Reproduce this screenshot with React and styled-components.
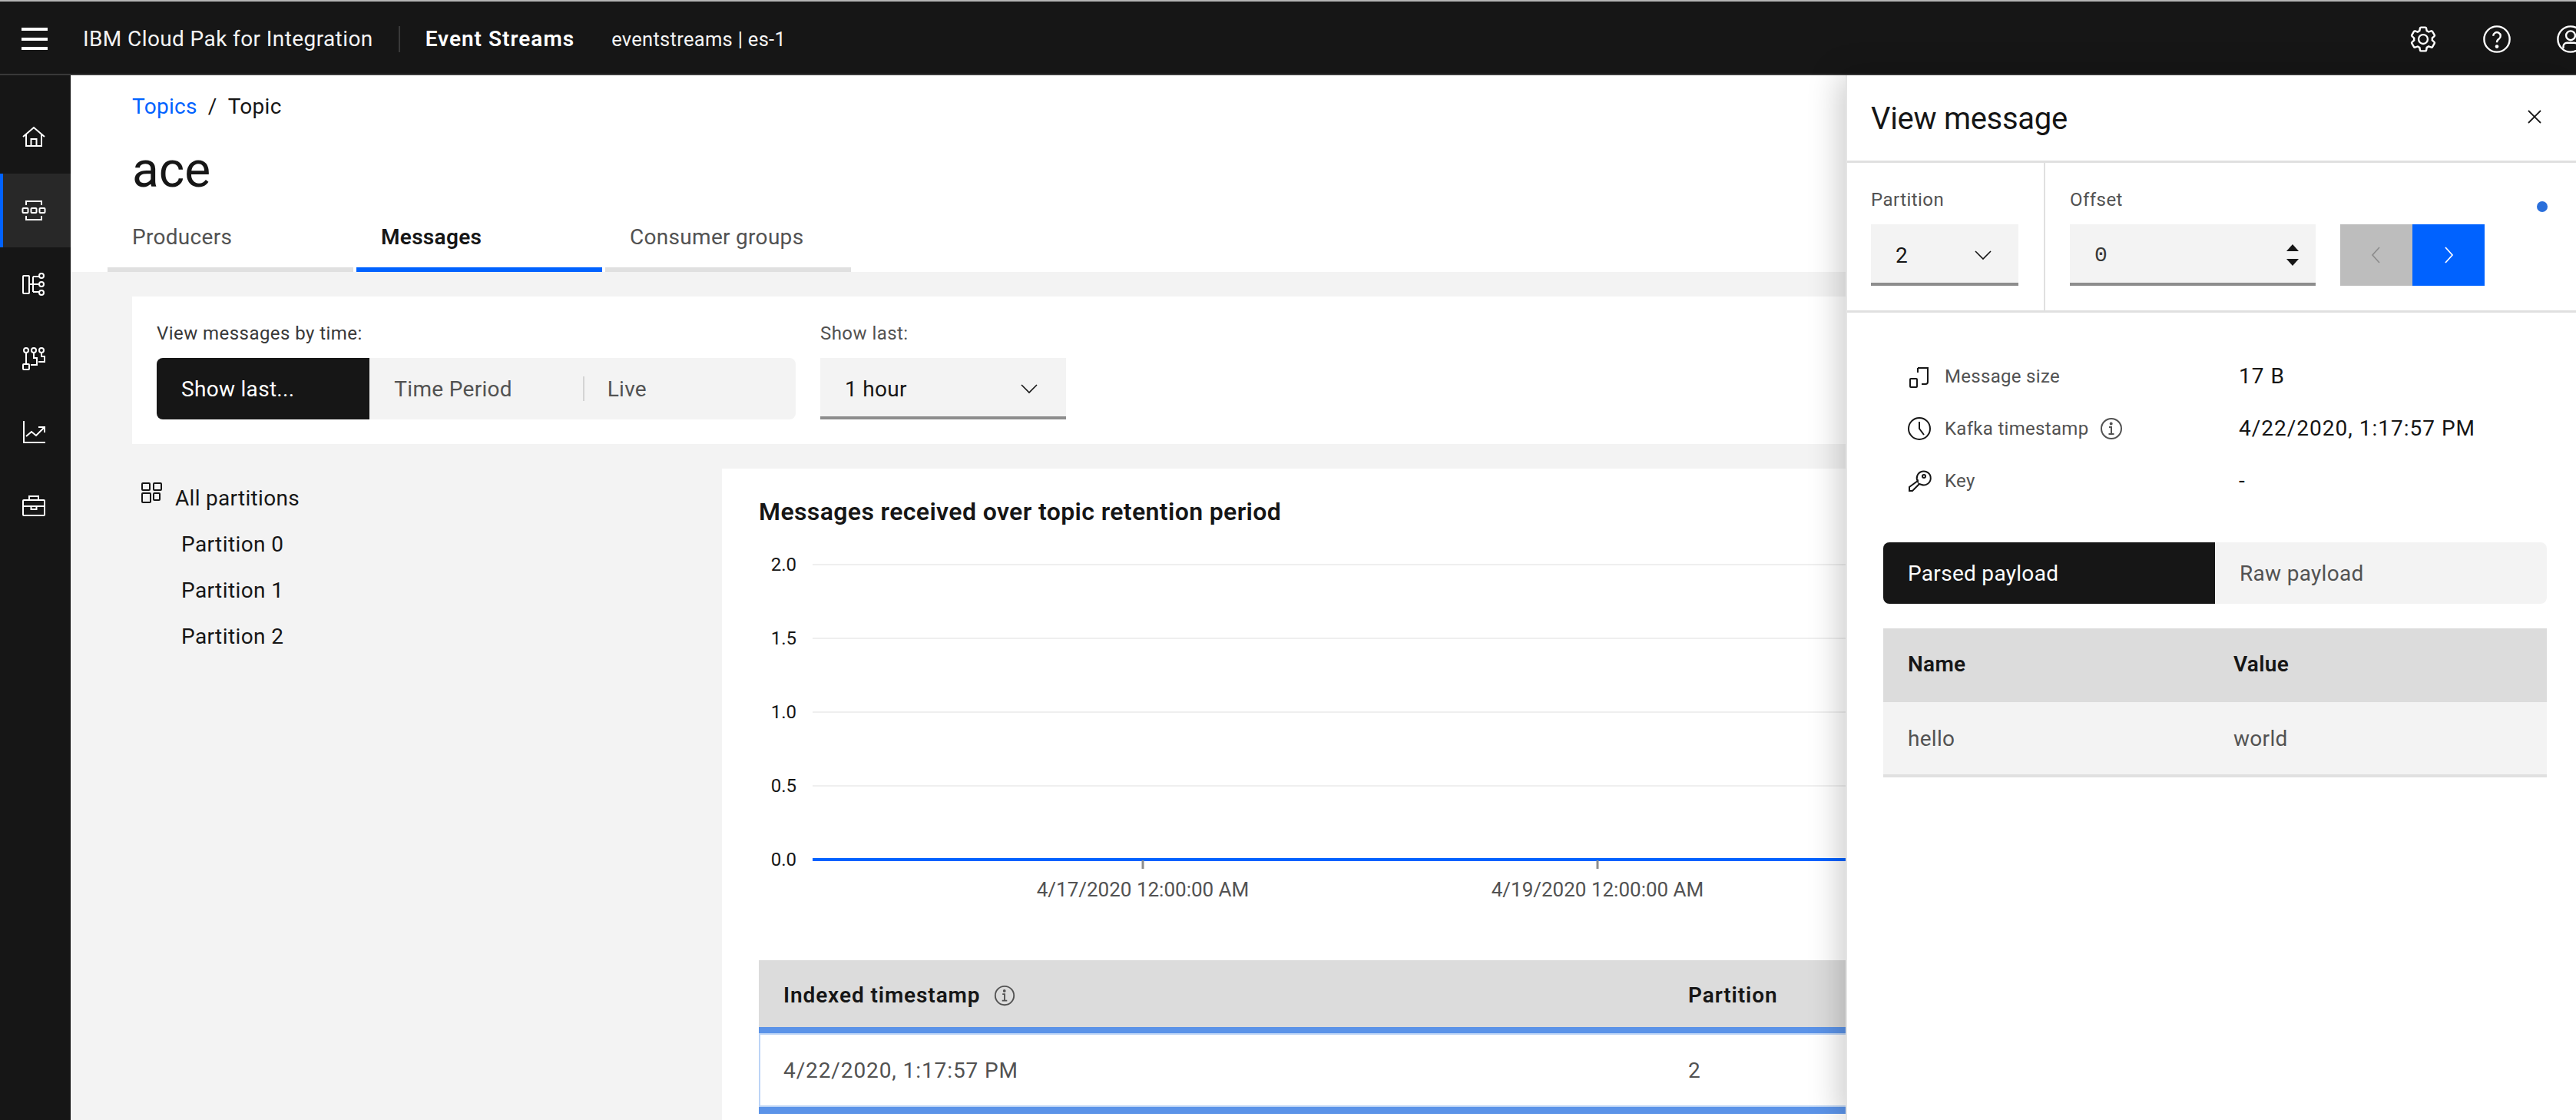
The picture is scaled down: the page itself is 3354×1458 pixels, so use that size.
import styled, { createGlobalStyle } from "styled-components";

const GlobalStyle = createGlobalStyle`
  html, body {
    margin: 0;
    padding: 0;
    background: #fff;
  }
  * {
    box-sizing: border-box;
  }
  body {
    font-family: "Roboto", "Liberation Sans", sans-serif;
    font-size: 28px;
    color: #161616;
  }
`;

const Page = styled.div`
  height: 1458px;
  display: flex;
  flex-direction: column;
  position: relative;
  overflow: hidden;
`;

const Header = styled.header`
  height: 98px;
  flex: none;
  display: flex;
  align-items: center;
  padding-top: 3px;
  background: #161616;
  border-top: 2px solid #b5b5b5;
  border-bottom: 2px solid #393939;
  color: #fff;
  position: relative;
`;

const MenuButton = styled.div`
  width: 34px;
  height: 29px;
  margin-left: 28px;
  margin-right: 46px;
  display: flex;
  flex-direction: column;
  justify-content: space-between;
  span {
    height: 4px;
    background: #fff;
  }
`;

const Brand = styled.span`
  font-size: 28px;
  letter-spacing: 0.4px;
  color: #f4f4f4;
  padding-right: 33px;
  height: 34px;
  line-height: 34px;
  border-right: 2px solid #393939;
`;

const Product = styled.span`
  font-weight: 600;
  font-size: 28px;
  letter-spacing: 1px;
  margin-left: 33px;
  margin-right: 48px;
`;

const Instance = styled.span`
  font-size: 25.5px;
  letter-spacing: 0.3px;
  color: #f4f4f4;
`;

const HeaderIcons = styled.div`
  margin-left: auto;
  display: flex;
  align-items: center;
  gap: 58px;
  margin-right: -12px;
  svg {
    display: block;
    width: 38px;
    height: 38px;
  }
`;

const Body = styled.div`
  flex: 1;
  display: flex;
  min-height: 0;
`;

const SideNav = styled.nav`
  width: 92px;
  flex: none;
  background: #161616;
  padding-top: 32px;
`;

const NavItem = styled.div`
  height: 96px;
  display: flex;
  align-items: center;
  justify-content: center;
  background: ${(p) => (p.$active ? "#282828" : "transparent")};
  border-left: 4px solid ${(p) => (p.$active ? "#0062ff" : "transparent")};
  padding-right: 8px;
  svg {
    width: 32px;
    height: 32px;
    fill: none;
    stroke: #fff;
    stroke-width: 2;
  }
`;

const Main = styled.main`
  flex: 1;
  min-width: 0;
  background: #f3f3f3;
`;

const TitleBar = styled.div`
  height: 256px;
  background: #fff;
  padding-left: 48px;
  display: flex;
  flex-direction: column;
`;

const Breadcrumb = styled.div`
  margin-left: 32px;
  height: 36px;
  line-height: 36px;
  margin-top: 23px;
  display: flex;
  gap: 14px;
  letter-spacing: 0.3px;
`;

const Crumb = styled.span`
  color: ${(p) => (p.$link ? "#0062ff" : "#161616")};
`;

const Title = styled.h1`
  margin: 27px 0 0 32px;
  font-size: 64px;
  line-height: 76px;
  font-weight: 400;
`;

const Tabs = styled.div`
  margin-top: auto;
  display: flex;
  gap: 4px;
`;

const Tab = styled.div`
  width: 320px;
  height: 76px;
  padding-left: 32px;
  padding-top: 13px;
  line-height: 36px;
  letter-spacing: 0.3px;
  font-weight: ${(p) => (p.$active ? 600 : 400)};
  color: ${(p) => (p.$active ? "#161616" : "#525252")};
  border-bottom: 6px solid ${(p) => (p.$active ? "#0062ff" : "#e0e0e0")};
`;

const Content = styled.div`
  padding: 32px 32px 0 80px;
`;

const FilterCard = styled.section`
  height: 192px;
  background: #fff;
  padding: 32px;
  display: flex;
  gap: 32px;
`;

const Field = styled.div`
  display: flex;
  flex-direction: column;
`;

const FieldLabel = styled.label`
  display: block;
  height: 48px;
  line-height: 32px;
  font-size: 24px;
  letter-spacing: 0.45px;
  color: ${(p) => p.$color || "#393939"};
`;

const Switcher = styled.div`
  width: ${(p) => p.$width}px;
  height: 80px;
  display: flex;
  border-radius: 8px;
  background: #f3f3f3;
  overflow: hidden;
`;

const SwitchItem = styled.div`
  flex: 1;
  display: flex;
  align-items: center;
  padding-left: 32px;
  letter-spacing: 0.3px;
  position: relative;
  background: ${(p) => (p.$active ? "#161616" : "transparent")};
  color: ${(p) => (p.$active ? "#fff" : "#525252")};
  &::before {
    content: "";
    display: ${(p) => (p.$divider ? "block" : "none")};
    position: absolute;
    left: 0;
    top: 24px;
    bottom: 24px;
    width: 2px;
    background: #d4d4d4;
  }
`;

const SelectBox = styled.div`
  width: ${(p) => p.$width}px;
  height: 80px;
  background: #f3f3f3;
  border-bottom: 4px solid #8d8d8d;
  display: flex;
  align-items: center;
  justify-content: space-between;
  padding: 4px ${(p) => p.$right}px 0 ${(p) => p.$left}px;
  letter-spacing: 0.3px;
  svg {
    width: 32px;
    height: 32px;
    fill: none;
    stroke: #161616;
    stroke-width: 1.6;
  }
`;

const Split = styled.div`
  margin-top: 32px;
  display: flex;
`;

const PartitionList = styled.aside`
  width: 768px;
  flex: none;
`;

const PartitionAll = styled.div`
  height: 60px;
  margin-top: 8px;
  padding-left: 12px;
  display: flex;
  align-items: center;
  gap: 16px;
  letter-spacing: 0.3px;
  svg {
    width: 28px;
    height: 28px;
    margin-top: -14px;
    fill: none;
    stroke: #161616;
    stroke-width: 2;
  }
`;

const PartitionItem = styled.div`
  height: 60px;
  line-height: 62px;
  padding-left: 64px;
  letter-spacing: 0.4px;
`;

const ChartCard = styled.section`
  flex: 1;
  min-width: 0;
  height: 848px;
  background: #fff;
  padding: 0 48px;
`;

const ChartTitle = styled.h2`
  margin: 0;
  height: 90px;
  padding-top: 34px;
  line-height: 44px;
  font-size: 32px;
  font-weight: 600;
  letter-spacing: 0.38px;
`;

const Chart = styled.svg`
  display: block;
  width: 100%;
  height: 550px;
  text {
    font-family: "Roboto", "Liberation Sans", sans-serif;
  }
`;

const TableRow = styled.div`
  display: grid;
  grid-template-columns: 1178px 1fr;
  align-items: center;
  letter-spacing: 0.3px;
`;

const MessagesHead = styled(TableRow)`
  height: 87px;
  padding-top: 4px;
  background: #dcdcdc;
  font-weight: 600;
  color: #161616;
  letter-spacing: 0.9px;
`;

const MessagesRow = styled(TableRow)`
  height: 113px;
  background: #fff;
  color: #525252;
  letter-spacing: 0.9px;
  border: solid #5b93e8;
  border-width: 8px 0 9px;
  box-shadow: inset 2px 0 0 #bcd4f6, inset 0 2px 0 #bcd4f6, inset 0 -2px 0 #bcd4f6;
`;

const Cell = styled.div`
  padding-left: 32px;
  display: flex;
  align-items: center;
  gap: 16px;
  svg {
    width: 30px;
    height: 30px;
    fill: none;
    stroke: #525252;
    stroke-width: 2;
  }
`;

const Panel = styled.aside`
  position: absolute;
  top: 98px;
  right: 0;
  bottom: 0;
  width: 951px;
  background: #fff;
  border-left: 2px solid #e4e4e4;
  box-shadow: -6px 0 40px rgba(0, 0, 0, 0.22);
`;

const PanelHead = styled.div`
  height: 114px;
  display: flex;
  align-items: center;
  justify-content: space-between;
  padding: 0 38px 0 31px;
  border-bottom: 3px solid #e0e0e0;
  svg {
    width: 32px;
    height: 32px;
    margin-top: -4px;
    fill: none;
    stroke: #161616;
    stroke-width: 1.8;
  }
`;

const PanelTitle = styled.h2`
  margin: 2px 0 0;
  font-size: 40px;
  font-weight: 400;
  letter-spacing: -0.3px;
`;

const PanelControls = styled.div`
  height: 195px;
  display: flex;
  border-bottom: 3px solid #e0e0e0;
  position: relative;
`;

const PartitionControl = styled.div`
  width: 258px;
  padding: 32px 0 0 31px;
  border-right: 2px solid #e0e0e0;
`;

const OffsetControl = styled.div`
  padding: 32px 0 0 32px;
`;

const OffsetRow = styled.div`
  display: flex;
  gap: 32px;
`;

const OffsetInput = styled.div`
  width: 320px;
  height: 80px;
  background: #f3f3f3;
  border-bottom: 4px solid #8d8d8d;
  display: flex;
  align-items: center;
  justify-content: space-between;
  padding: 4px 22px 0 32px;
  font-family: "Liberation Mono", monospace;
  color: #393939;
`;

const Stepper = styled.div`
  display: flex;
  flex-direction: column;
  gap: 10px;
  i {
    display: block;
    width: 0;
    height: 0;
    border-left: 8px solid transparent;
    border-right: 8px solid transparent;
  }
  i:first-child {
    border-bottom: 9px solid #161616;
  }
  i:last-child {
    border-top: 9px solid #161616;
  }
`;

const PagerButton = styled.div`
  width: 94px;
  height: 80px;
  display: flex;
  align-items: center;
  justify-content: center;
  background: ${(p) => (p.$primary ? "#0062ff" : "#bdbdbd")};
  svg {
    width: 32px;
    height: 32px;
    fill: none;
    stroke: ${(p) => (p.$primary ? "#fff" : "#8d8d8d")};
    stroke-width: 1.7;
  }
`;

const Pager = styled.div`
  display: flex;
`;

const StatusDot = styled.span`
  position: absolute;
  top: 50px;
  left: 898px;
  width: 14px;
  height: 14px;
  border-radius: 50%;
  background: #2a6fdb;
`;

const PanelBody = styled.div`
  padding: 0 38px 0 47px;
`;

const MetaList = styled.div`
  padding-top: 49px;
  margin-bottom: 46px;
`;

const MetaRow = styled.div`
  height: 68px;
  display: grid;
  grid-template-columns: 432px 1fr;
  align-items: center;
  padding-left: 31px;
`;

const MetaLabel = styled.div`
  display: flex;
  align-items: center;
  font-size: 24px;
  letter-spacing: 0.3px;
  color: #525252;
  svg {
    width: 32px;
    height: 32px;
    margin-right: 17px;
    flex: none;
    fill: none;
    stroke: #161616;
    stroke-width: 2;
  }
`;

const MetaInfo = styled.span`
  margin-left: 14px;
  display: flex;
  svg {
    width: 32px;
    height: 32px;
    margin: 0;
    stroke: #525252;
  }
`;

const MetaValue = styled.div`
  letter-spacing: 1px;
  margin-top: -2px;
`;

const PayloadTable = styled.div`
  margin-top: 32px;
`;

const PayloadRow = styled.div`
  display: grid;
  grid-template-columns: 424px 1fr;
  align-items: center;
  height: ${(p) => (p.$head ? 96 : 98)}px;
  padding-bottom: ${(p) => (p.$head ? 3 : 0)}px;
  background: ${(p) => (p.$head ? "#dcdcdc" : "#f3f3f3")};
  color: ${(p) => (p.$head ? "#161616" : "#525252")};
  font-weight: ${(p) => (p.$head ? 600 : 400)};
  border-bottom: ${(p) => (p.$head ? "none" : "4px solid #e0e0e0")};
  letter-spacing: 0.3px;
  span {
    padding-left: 32px;
  }
`;

const Info = () => (
  <svg viewBox="0 0 32 32">
    <circle cx="16" cy="16" r="13" />
    <path d="M12.5 23h7M16 23v-9h-3" />
    <circle cx="15.7" cy="9.5" r="1" />
  </svg>
);

const Chevron = () => (
  <svg viewBox="0 0 32 32">
    <path d="M6 11l10 10 10-10" />
  </svg>
);

const gridLines = [
  { y: 35, label: "2.0" },
  { y: 131, label: "1.5" },
  { y: 227, label: "1.0" },
  { y: 323, label: "0.5" },
];

const xTicks = [
  { x: 500, label: "4/17/2020 12:00:00 AM" },
  { x: 1092, label: "4/19/2020 12:00:00 AM" },
];

const menuRows = ["Partition 0", "Partition 1", "Partition 2"];

export default function App() {
  return (
    <Page>
      <GlobalStyle />
      <Header>
        <MenuButton>
          <span />
          <span />
          <span />
        </MenuButton>
        <Brand>IBM Cloud Pak for Integration</Brand>
        <Product>Event Streams</Product>
        <Instance>eventstreams | es-1</Instance>
        <HeaderIcons>
          <svg viewBox="0 0 32 32" fill="#fff">
            <path d="M27,16.76c0-.25,0-.5,0-.76s0-.51,0-.77l1.92-1.68A2,2,0,0,0,29.3,11L26.94,7a2,2,0,0,0-1.73-1,2,2,0,0,0-.64.1l-2.43.82a11.35,11.35,0,0,0-1.31-.75l-.51-2.52a2,2,0,0,0-2-1.61H13.64a2,2,0,0,0-2,1.61l-.51,2.52a11.48,11.48,0,0,0-1.32.75L7.43,6.06A2,2,0,0,0,6.79,6,2,2,0,0,0,5.06,7L2.7,11a2,2,0,0,0,.41,2.51L5,15.24c0,.25,0,.5,0,.76s0,.51,0,.77L3.11,18.45A2,2,0,0,0,2.7,21L5.06,25a2,2,0,0,0,1.73,1,2,2,0,0,0,.64-.1l2.43-.82a11.35,11.35,0,0,0,1.31.75l.51,2.52a2,2,0,0,0,2,1.61h4.72a2,2,0,0,0,2-1.61l.51-2.52a11.48,11.48,0,0,0,1.32-.75l2.42.82a2,2,0,0,0,.64.1,2,2,0,0,0,1.73-1L29.3,21a2,2,0,0,0-.41-2.51ZM25.21,24l-3.43-1.16a8.86,8.86,0,0,1-2.71,1.57L18.36,28H13.64l-.71-3.55a9.36,9.36,0,0,1-2.7-1.57L6.79,24,4.43,20l2.72-2.4a8.9,8.9,0,0,1,0-3.13L4.43,12,6.79,8l3.43,1.16a8.86,8.86,0,0,1,2.71-1.57L13.64,4h4.72l.71,3.55a9.36,9.36,0,0,1,2.7,1.57L25.21,8,27.57,12l-2.72,2.4a8.9,8.9,0,0,1,0,3.13L27.57,20Z" />
            <path d="M16,22a6,6,0,1,1,6-6A5.94,5.94,0,0,1,16,22Zm0-10a3.91,3.91,0,0,0-4,4,3.91,3.91,0,0,0,4,4,3.91,3.91,0,0,0,4-4A3.91,3.91,0,0,0,16,12Z" />
          </svg>
          <svg viewBox="0 0 32 32" fill="none" stroke="#fff" strokeWidth="2">
            <circle cx="16" cy="16" r="14" />
            <path d="M12 12.5a4 4 0 1 1 6.2 3.3c-1.4.9-2.2 1.6-2.2 3.7" />
            <circle cx="16" cy="24" r="1" fill="#fff" />
          </svg>
          <svg viewBox="0 0 32 32" fill="none" stroke="#fff" strokeWidth="2">
            <circle cx="16" cy="16" r="14" />
            <circle cx="16" cy="12" r="5" />
            <path d="M8 26v-2a4 4 0 0 1 4-4h8a4 4 0 0 1 4 4v2" />
          </svg>
        </HeaderIcons>
      </Header>
      <Body>
        <SideNav>
          <NavItem>
            <svg viewBox="0 0 32 32">
              <path d="M2 16L16 4l14 12M6 13v15h20V13M12.5 28v-9h7v9" />
            </svg>
          </NavItem>
          <NavItem $active>
            <svg viewBox="0 0 32 32">
              <path d="M6 9V4h20v5M6 23v5h20v-5" />
              <rect x="1.5" y="13" width="7" height="6" rx="1" />
              <rect x="12.5" y="13" width="7" height="6" rx="1" />
              <rect x="23.5" y="13" width="7" height="6" rx="1" />
            </svg>
          </NavItem>
          <NavItem>
            <svg viewBox="0 0 32 32">
              <rect x="2" y="5" width="8" height="23" rx="1" />
              <path d="M10 16h13M15 6h8M15 26h8M15 6v20" />
              <circle cx="26" cy="5" r="3" />
              <circle cx="26" cy="16" r="3" />
              <circle cx="26" cy="27" r="3" />
            </svg>
          </NavItem>
          <NavItem>
            <svg viewBox="0 0 32 32">
              <circle cx="6" cy="6" r="3" />
              <circle cx="16" cy="6" r="3" />
              <circle cx="26" cy="6" r="3" />
              <rect x="2" y="24" width="8" height="7" rx="1" />
              <path d="M6 9v15M16 9v7h4v9h-8M26 9v5h4v7h-8" />
            </svg>
          </NavItem>
          <NavItem>
            <svg viewBox="0 0 32 32">
              <path d="M3 2v28h28M6 22l7-6 6 5 10-10M22 10h8v7" />
            </svg>
          </NavItem>
          <NavItem>
            <svg viewBox="0 0 32 32">
              <rect x="2" y="9" width="28" height="20" rx="1" />
              <path d="M10 9V4h12v5M2 17h28" />
              <rect x="12.5" y="17" width="7" height="4" />
            </svg>
          </NavItem>
        </SideNav>
        <Main>
          <TitleBar>
            <Breadcrumb>
              <Crumb $link>Topics</Crumb>
              <Crumb>/</Crumb>
              <Crumb>Topic</Crumb>
            </Breadcrumb>
            <Title>ace</Title>
            <Tabs>
              <Tab>Producers</Tab>
              <Tab $active>Messages</Tab>
              <Tab>Consumer groups</Tab>
            </Tabs>
          </TitleBar>
          <Content>
            <FilterCard>
              <Field>
                <FieldLabel>View messages by time:</FieldLabel>
                <Switcher $width={832}>
                  <SwitchItem $active>Show last...</SwitchItem>
                  <SwitchItem>Time Period</SwitchItem>
                  <SwitchItem $divider>Live</SwitchItem>
                </Switcher>
              </Field>
              <Field>
                <FieldLabel $color="#525252">Show last:</FieldLabel>
                <SelectBox $width={320} $left={32} $right={32}>
                  1 hour
                  <Chevron />
                </SelectBox>
              </Field>
            </FilterCard>
            <Split>
              <PartitionList>
                <PartitionAll>
                  <svg viewBox="0 0 28 28">
                    <rect x="1" y="2" width="10" height="9" rx="1" />
                    <rect x="16" y="2" width="10" height="9" rx="1" />
                    <rect x="1" y="15" width="11" height="12" rx="1" />
                    <rect x="16" y="15" width="8" height="9" rx="1" />
                  </svg>
                  All partitions
                </PartitionAll>
                {menuRows.map((row) => (
                  <PartitionItem key={row}>{row}</PartitionItem>
                ))}
              </PartitionList>
              <ChartCard>
                <ChartTitle>Messages received over topic retention period</ChartTitle>
                <Chart>
                  {gridLines.map((line) => (
                    <g key={line.label}>
                      <line x1="70" x2="2286" y1={line.y} y2={line.y} stroke="#efefef" strokeWidth="2" />
                      <text x="49" y={line.y + 8} fontSize="24" fill="#161616" textAnchor="end">
                        {line.label}
                      </text>
                    </g>
                  ))}
                  <line x1="70" x2="2286" y1="419" y2="419" stroke="#0062ff" strokeWidth="4" />
                  <text x="49" y="427" fontSize="24" fill="#161616" textAnchor="end">
                    0.0
                  </text>
                  {xTicks.map((tick) => (
                    <g key={tick.label}>
                      <line x1={tick.x} x2={tick.x} y1="420" y2="431" stroke="#8d8d8d" strokeWidth="3" />
                      <text x={tick.x} y="467" fontSize="26" fill="#525252" textAnchor="middle">
                        {tick.label}
                      </text>
                    </g>
                  ))}
                </Chart>
                <MessagesHead>
                  <Cell>
                    Indexed timestamp
                    <Info />
                  </Cell>
                  <Cell>Partition</Cell>
                </MessagesHead>
                <MessagesRow>
                  <Cell>4/22/2020, 1:17:57 PM</Cell>
                  <Cell>2</Cell>
                </MessagesRow>
              </ChartCard>
            </Split>
          </Content>
        </Main>
      </Body>
      <Panel>
        <PanelHead>
          <PanelTitle>View message</PanelTitle>
          <svg viewBox="0 0 32 32">
            <path d="M8 8l16 16M24 8L8 24" />
          </svg>
        </PanelHead>
        <PanelControls>
          <PartitionControl>
            <FieldLabel $color="#525252">Partition</FieldLabel>
            <SelectBox $width={192} $left={32} $right={30}>
              2
              <Chevron />
            </SelectBox>
          </PartitionControl>
          <OffsetControl>
            <FieldLabel $color="#525252">Offset</FieldLabel>
            <OffsetRow>
              <OffsetInput>
                0
                <Stepper>
                  <i />
                  <i />
                </Stepper>
              </OffsetInput>
              <Pager>
                <PagerButton>
                  <svg viewBox="0 0 32 32">
                    <path d="M20 6L11 16l9 10" />
                  </svg>
                </PagerButton>
                <PagerButton $primary>
                  <svg viewBox="0 0 32 32">
                    <path d="M12 6l9 10-9 10" />
                  </svg>
                </PagerButton>
              </Pager>
            </OffsetRow>
          </OffsetControl>
          <StatusDot />
        </PanelControls>
        <PanelBody>
          <MetaList>
            <MetaRow>
              <MetaLabel>
                <svg viewBox="0 0 32 32">
                  <path d="M14 5h13v18a3 3 0 0 1-3 3h-5" />
                  <rect x="4" y="19" width="9" height="11" rx="1" />
                  <path d="M14 5v6" />
                </svg>
                Message size
              </MetaLabel>
              <MetaValue>17 B</MetaValue>
            </MetaRow>
            <MetaRow>
              <MetaLabel>
                <svg viewBox="0 0 32 32">
                  <circle cx="16" cy="16" r="14" />
                  <path d="M16 7v9l6 8" />
                </svg>
                Kafka timestamp
                <MetaInfo>
                  <Info />
                </MetaInfo>
              </MetaLabel>
              <MetaValue>4/22/2020, 1:17:57 PM</MetaValue>
            </MetaRow>
            <MetaRow>
              <MetaLabel>
                <svg viewBox="0 0 32 32">
                  <path d="M14 17a9 9 0 1 1 5 4l-3-1-9 9H3v-5l11-8z" />
                  <circle cx="22" cy="10" r="2" />
                </svg>
                Key
              </MetaLabel>
              <MetaValue>-</MetaValue>
            </MetaRow>
          </MetaList>
          <Switcher $width={864}>
            <SwitchItem $active>Parsed payload</SwitchItem>
            <SwitchItem>Raw payload</SwitchItem>
          </Switcher>
          <PayloadTable>
            <PayloadRow $head>
              <span>Name</span>
              <span>Value</span>
            </PayloadRow>
            <PayloadRow>
              <span>hello</span>
              <span>world</span>
            </PayloadRow>
          </PayloadTable>
        </PanelBody>
      </Panel>
    </Page>
  );
}
